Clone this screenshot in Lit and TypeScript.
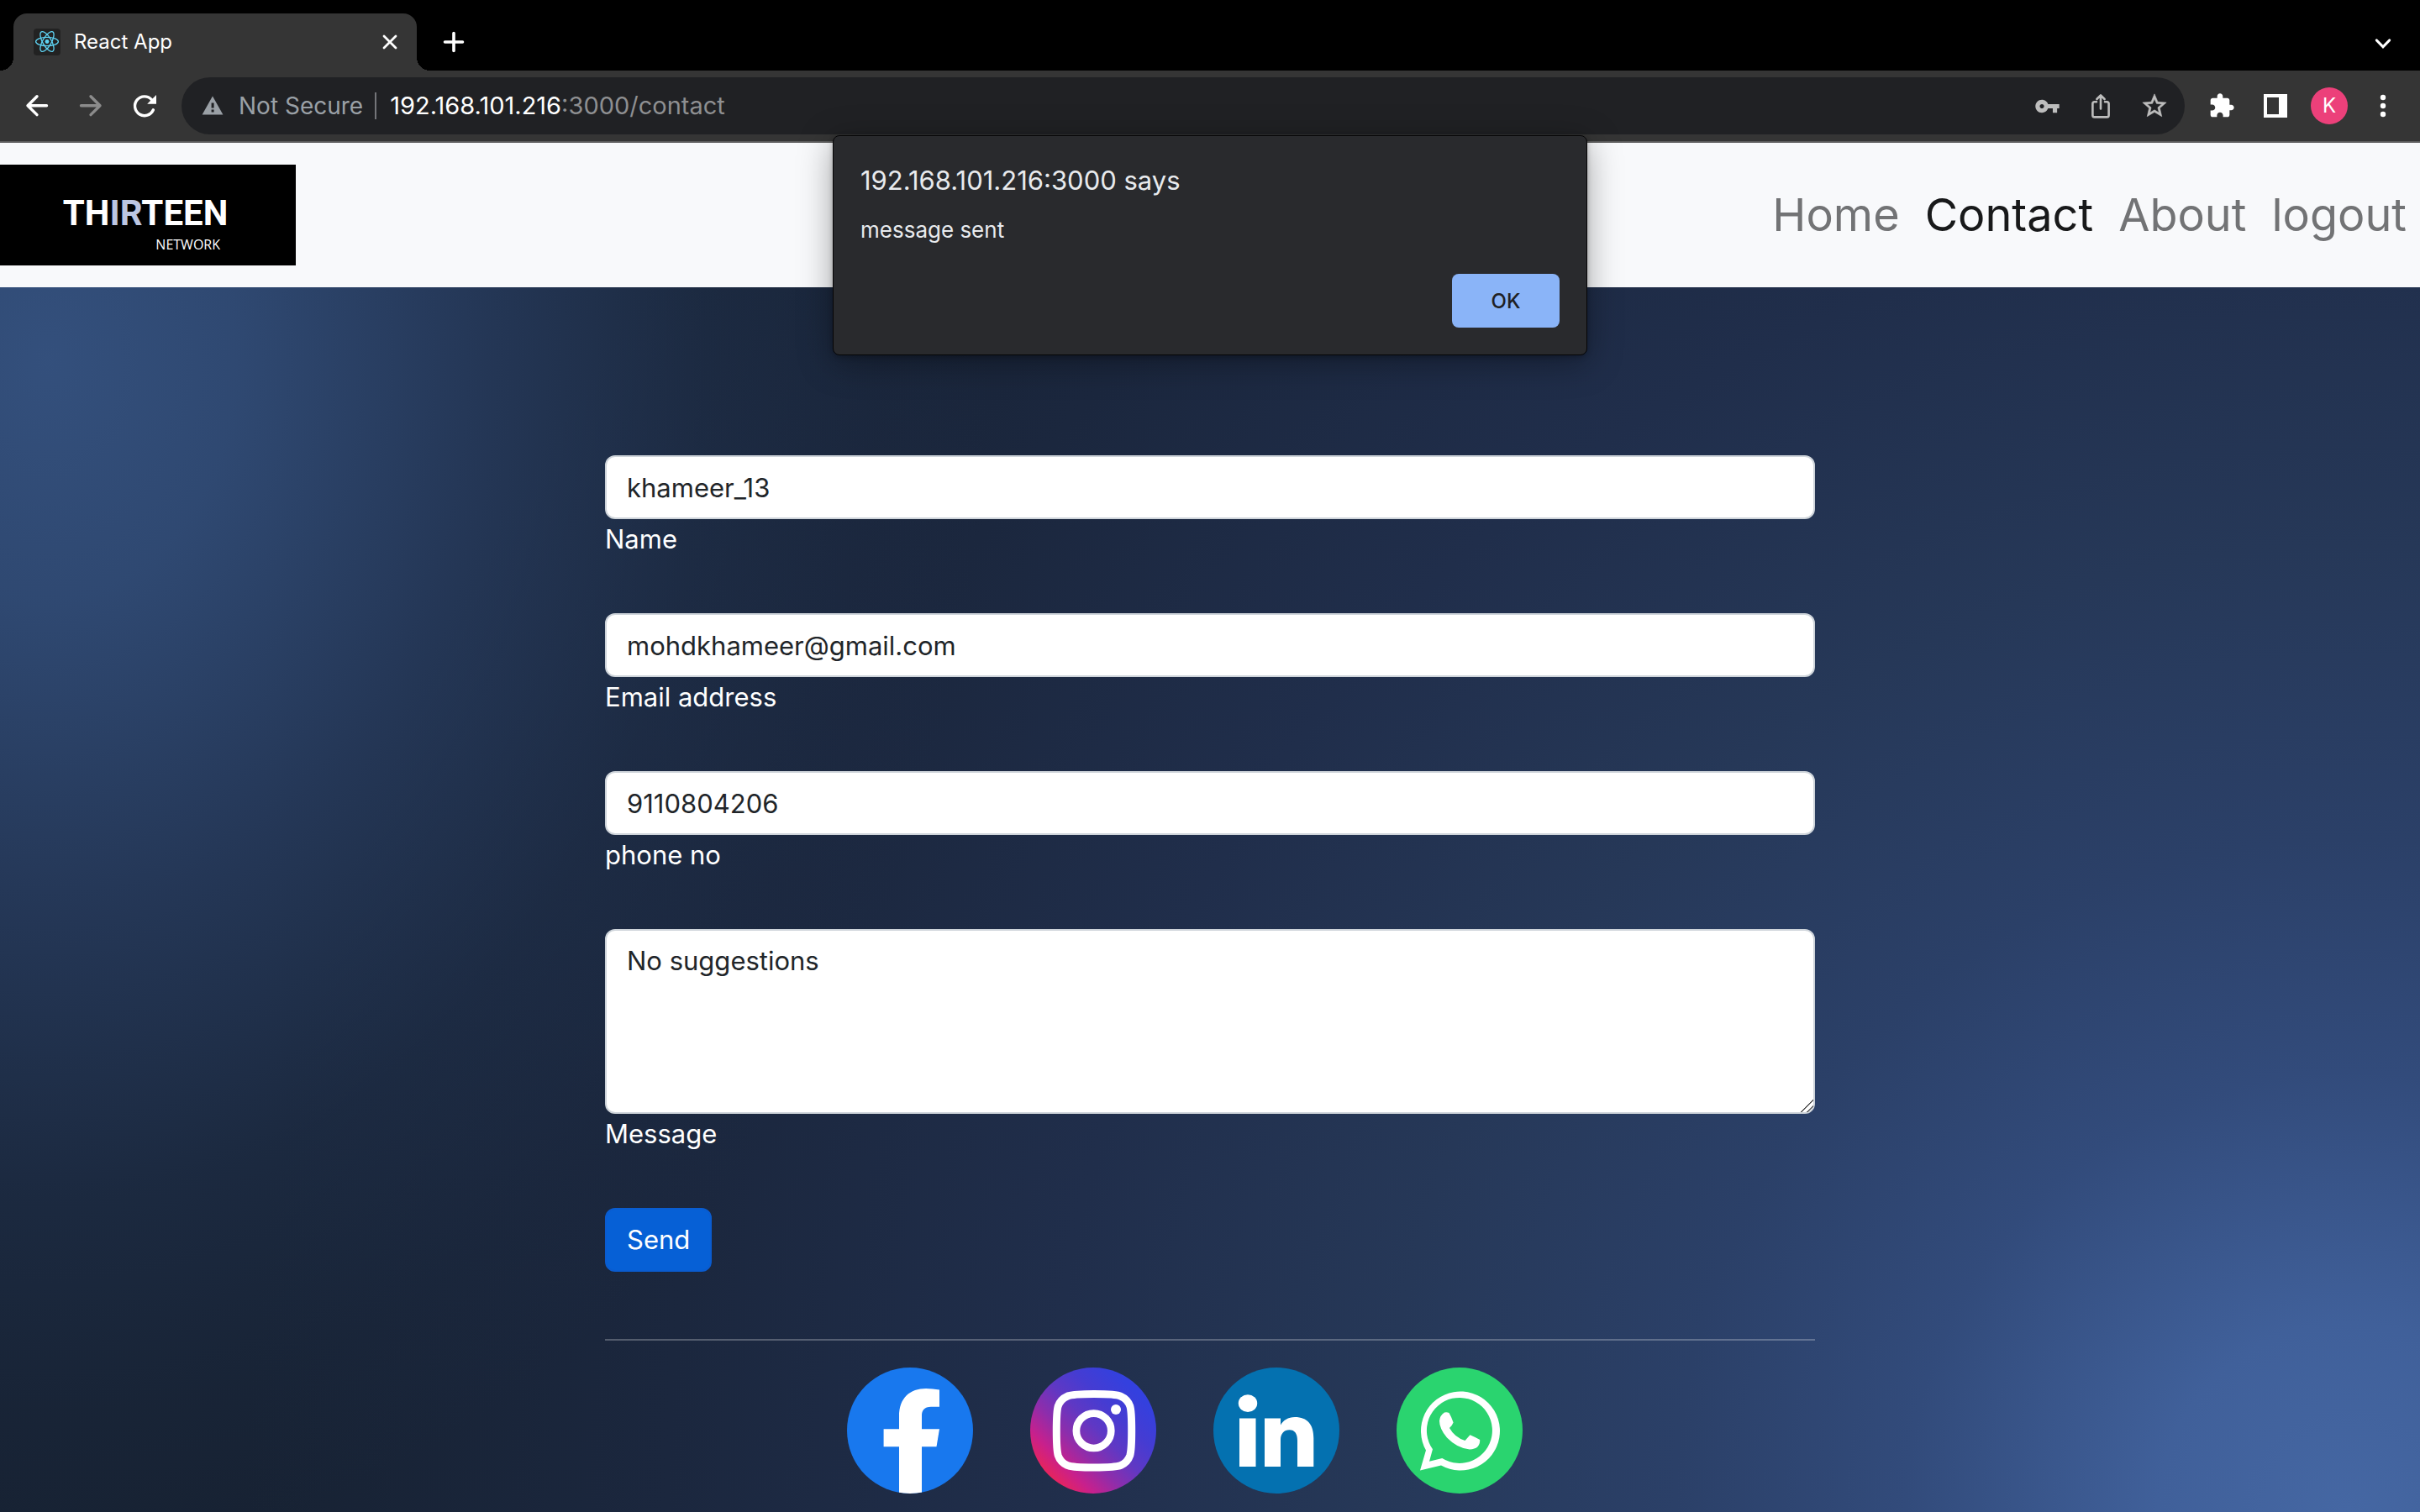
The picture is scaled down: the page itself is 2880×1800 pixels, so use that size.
import { LitElement, html, css, svg } from "lit";
import { customElement, property } from "lit/decorators.js";
import { classMap } from "lit/directives/class-map.js";

/* ---------- Browser frame ---------- */

@customElement("browser-bar")
class BrowserBar extends LitElement {
  static styles = css`
    :host {
      display: block;
      color: #fff;
    }
    button {
      appearance: none;
      border: 0;
      padding: 0;
      margin: 0;
      background: none;
      color: inherit;
      font: inherit;
      display: flex;
      align-items: center;
      justify-content: center;
      flex: none;
      width: 64px;
      height: 64px;
    }
    svg {
      display: block;
      flex: none;
    }
    .strip {
      display: flex;
      align-items: flex-end;
      justify-content: space-between;
      background: #000;
      padding: 16px 12px 0 16px;
    }
    .tabs {
      display: flex;
      align-items: center;
      gap: 12px;
    }
    .tab {
      position: relative;
      display: flex;
      align-items: center;
      gap: 16px;
      box-sizing: border-box;
      width: 480px;
      height: 68px;
      padding-left: 24px;
      background: #353535;
      border-radius: 16px 16px 0 0;
    }
    .tab::before,
    .tab::after {
      content: "";
      position: absolute;
      bottom: 0;
      width: 16px;
      height: 16px;
    }
    .tab::before {
      right: 100%;
      background: radial-gradient(circle at 0 0, transparent 16px, #353535 16px);
    }
    .tab::after {
      left: 100%;
      background: radial-gradient(circle at 100% 0, transparent 16px, #353535 16px);
    }
    .title {
      flex: 1;
      font-size: 24px;
      line-height: 32px;
    }
    .toolbar {
      display: flex;
      align-items: center;
      gap: 12px;
      padding: 8px 12px;
      background: #353535;
      border-bottom: 2px solid #5d5d5d;
    }
    .group {
      display: flex;
    }
    .muted {
      color: #8b8b8b;
    }
    .address {
      flex: 1;
      display: flex;
      align-items: center;
      height: 68px;
      box-sizing: border-box;
      padding: 0 4px 0 24px;
      border-radius: 34px;
      background: #202124;
      font-size: 28px;
      line-height: 36px;
    }
    .status {
      display: flex;
      align-items: center;
      gap: 18px;
      padding-right: 14px;
      border-right: 2px solid #747579;
      margin-right: 16px;
      color: #9aa0a6;
      line-height: 32px;
    }
    .url {
      flex: 1;
      color: #8e8f91;
      font-size: 29px;
    }
    .host {
      color: #fff;
    }
    .tools {
      color: #bdbdbd;
    }
    .avatar {
      width: 44px;
      height: 44px;
      border-radius: 50%;
      background: #ec407a;
      display: flex;
      align-items: center;
      justify-content: center;
      font-size: 24px;
      line-height: 44px;
    }
  `;

  render() {
    return html`
      <div class="strip">
        <div class="tabs">
          <div class="tab">
            <svg width="32" height="32" viewBox="0 0 32 32" fill="none" stroke="#5ed3f3" stroke-width="1.3" aria-hidden="true">
              <rect width="32" height="32" rx="4" fill="#222" stroke="none" />
              <ellipse cx="16" cy="15.5" rx="13.4" ry="5.2" />
              <ellipse cx="16" cy="15.5" rx="13.4" ry="5.2" transform="rotate(60 16 15.5)" />
              <ellipse cx="16" cy="15.5" rx="13.4" ry="5.2" transform="rotate(120 16 15.5)" />
              <circle cx="16" cy="15.5" r="2.4" fill="#5ed3f3" stroke="none" />
            </svg>
            <span class="title">React App</span>
            <button aria-label="Close tab">
              <svg width="20" height="20" viewBox="0 0 20 20" stroke="currentColor" stroke-width="2.8" stroke-linecap="round"><path d="M3 3l14 14M17 3L3 17" /></svg>
            </button>
          </div>
          <button aria-label="New tab">
            <svg width="28" height="28" viewBox="0 0 28 28" stroke="currentColor" stroke-width="3.6" stroke-linecap="round"><path d="M14 3.5v21M3.5 14h21" /></svg>
          </button>
        </div>
        <button aria-label="Search tabs">
          <svg width="24" height="24" viewBox="0 0 24 24" fill="none" stroke="currentColor" stroke-width="3.2" stroke-linecap="round"><path d="M4.4 8L12 15.8 19.6 8" /></svg>
        </button>
      </div>
      <div class="toolbar">
        <div class="group">
          <button aria-label="Back">
            <svg width="32" height="32" viewBox="0 0 32 32" fill="none" stroke="currentColor" stroke-width="3.4" stroke-linecap="round" stroke-linejoin="round"><path d="M27.5 15.7H5M16 4.8L5 15.7 16 26.6" /></svg>
          </button>
          <button class="muted" aria-label="Forward">
            <svg width="32" height="32" viewBox="0 0 32 32" fill="none" stroke="currentColor" stroke-width="3.4" stroke-linecap="round" stroke-linejoin="round"><path d="M4.5 15.7H27M16 4.8l11 10.9L16 26.6" /></svg>
          </button>
          <button aria-label="Reload">
            <svg width="40" height="40" viewBox="0 0 40 40" fill="none" stroke="currentColor" stroke-width="3.4" stroke-linecap="round">
              <path d="M30.4 24.8A11.4 11.4 0 1 1 28.4 12.6" />
              <path d="M34 7V17.8H23.2Z" fill="currentColor" stroke="none" />
            </svg>
          </button>
        </div>
        <div class="address">
          <span class="status">
            <svg width="26" height="24" viewBox="0 0 26 24" aria-hidden="true"><path d="M13 0.5L25.4 22.5H0.6Z" fill="currentColor" /><path d="M11.6 8.5h3v6h-3zM11.6 16.6h3v3h-3z" fill="#202124" /></svg>
            Not Secure
          </span>
          <span class="url"><span class="host">192.168.101.216</span>:3000/contact</span>
          <div class="group tools">
            <button aria-label="Manage passwords">
              <svg width="31" height="31" viewBox="0 0 24 24" fill="currentColor"><path d="M12.65 10C11.83 7.67 9.61 6 7 6c-3.31 0-6 2.69-6 6s2.69 6 6 6c2.61 0 4.83-1.67 5.65-4H17v4h4v-4h2v-4H12.65zM7 14c-1.1 0-2-.9-2-2s.9-2 2-2 2 .9 2 2-.9 2-2 2z" /></svg>
            </button>
            <button aria-label="Share">
              <svg width="32" height="32" viewBox="0 0 32 32" fill="none" stroke="currentColor" stroke-width="2.6" stroke-linecap="round" stroke-linejoin="round"><path d="M11 11.2H8.6Q6.4 11.2 6.4 13.4V27.2Q6.4 29.4 8.6 29.4H23.4Q25.6 29.4 25.6 27.2V13.4Q25.6 11.2 23.4 11.2H21M16 19.5V3.6M11.4 8L16 3.4 20.6 8" /></svg>
            </button>
            <button aria-label="Bookmark this tab">
              <svg width="34" height="34" viewBox="0 0 24 24" fill="currentColor" stroke="currentColor" stroke-width="0.4"><path d="M22 9.24l-7.19-.62L12 2 9.19 8.63 2 9.24l5.46 4.73L5.82 21 12 17.27 18.18 21l-1.63-7.03L22 9.24zM12 15.4l-3.76 2.27 1-4.28-3.32-2.88 4.38-.38L12 6.1l1.71 4.04 4.38.38-3.32 2.88 1 4.28L12 15.4z" /></svg>
            </button>
          </div>
        </div>
        <div class="group">
          <button aria-label="Extensions">
            <svg width="32" height="32" viewBox="0 0 24 24" fill="currentColor"><path d="M20.5 11H19V7c0-1.1-.9-2-2-2h-4V3.5C13 2.12 11.88 1 10.5 1S8 2.12 8 3.5V5H4c-1.1 0-1.99.9-1.99 2v3.8H3.5c1.49 0 2.7 1.21 2.7 2.7s-1.21 2.7-2.7 2.7H2V20c0 1.1.9 2 2 2h3.8v-1.5c0-1.49 1.21-2.7 2.7-2.7 1.49 0 2.7 1.21 2.7 2.7V22H17c1.1 0 2-.9 2-2v-4h1.5c1.38 0 2.5-1.12 2.5-2.5S21.88 11 20.5 11z" /></svg>
          </button>
          <button aria-label="Side panel">
            <svg width="28" height="28" viewBox="0 0 28 28" fill="currentColor" fill-rule="evenodd"><path d="M0 0h28v28H0zM4 4v20h14V4z" /></svg>
          </button>
          <button aria-label="Profile"><span class="avatar">K</span></button>
          <button aria-label="Menu">
            <svg width="8" height="28" viewBox="0 0 8 28" fill="currentColor"><circle cx="4" cy="4" r="3.2" /><circle cx="4" cy="14" r="3.2" /><circle cx="4" cy="24" r="3.2" /></svg>
          </button>
        </div>
      </div>
    `;
  }
}

/* ---------- Site header ---------- */

@customElement("site-header")
class SiteHeader extends LitElement {
  @property() current = "Contact";

  static styles = css`
    :host {
      display: flex;
      align-items: center;
      justify-content: space-between;
      padding: 26px 0;
      background: #f8f9fb;
    }
    .brand {
      display: flex;
      flex-direction: column;
      align-items: center;
      justify-content: flex-end;
      box-sizing: border-box;
      width: 352px;
      height: 120px;
      padding: 0 6px 14px 0;
      background: #000;
      color: #fff;
      text-decoration: none;
    }
    .word {
      font-family: Roboto, "Open Sans", sans-serif;
      font-weight: 700;
      font-size: 42px;
      line-height: 52px;
    }
    .accent {
      color: #bcc6e2;
    }
    .sub {
      align-self: flex-end;
      padding-right: 84px;
      font-family: "Open Sans", sans-serif;
      font-size: 16px;
      line-height: 22px;
    }
    nav {
      display: flex;
      gap: 30px;
      padding-right: 16px;
    }
    .link {
      font-size: 54px;
      line-height: 80px;
      color: #727375;
      text-decoration: none;
    }
    .active {
      color: #18191a;
    }
  `;

  render() {
    return html`
      <a class="brand" href="#home">
        <span class="word">TH<span class="accent">IR</span>TEEN</span>
        <span class="sub">NETWORK</span>
      </a>
      <nav>
        ${["Home", "Contact", "About", "logout"].map(
          (name) => html`<a
            class=${classMap({ link: true, active: name === this.current })}
            href="#${name.toLowerCase()}"
            >${name}</a
          >`
        )}
      </nav>
    `;
  }
}

/* ---------- Contact form ---------- */

interface Field {
  id: string;
  label: string;
  type: string;
  value: string;
}

const FIELDS: Field[] = [
  { id: "name", label: "Name", type: "text", value: "khameer_13" },
  { id: "email", label: "Email address", type: "email", value: "mohdkhameer@gmail.com" },
  { id: "phone", label: "phone no", type: "tel", value: "9110804206" },
];

@customElement("contact-form")
class ContactForm extends LitElement {
  static styles = css`
    :host {
      display: block;
    }
    form {
      display: flex;
      flex-direction: column;
      align-items: flex-start;
      gap: 64px;
    }
    .field {
      display: flex;
      flex-direction: column;
      align-items: flex-start;
      width: 100%;
    }
    .control,
    .send {
      box-sizing: border-box;
      margin: 0;
      font: inherit;
      font-size: 31px;
      line-height: 48px;
      padding: 12px 24px;
      border: 2px solid #ced4da;
      border-radius: 12px;
    }
    .control {
      width: 100%;
      height: 76px;
      color: #212529;
      background: #fff;
      outline: none;
    }
    .area {
      display: block;
      height: 220px;
      resize: vertical;
    }
    .area::-webkit-scrollbar {
      width: 20px;
      background: transparent;
    }
    .area::-webkit-resizer {
      background: linear-gradient(
        135deg,
        transparent 48%,
        #4a4a4a 50%,
        #4a4a4a 53%,
        transparent 55%,
        transparent 72%,
        #4a4a4a 74%,
        #4a4a4a 77%,
        transparent 79%
      );
    }
    label {
      font-size: 31px;
      line-height: 48px;
      color: #fff;
    }
    .send {
      color: #fff;
      background: #0660d6;
      border-color: #0a5cd0;
    }
  `;

  render() {
    return html`
      <form @submit=${(e: Event) => e.preventDefault()}>
        ${FIELDS.map(
          (f) => html`<div class="field">
            <input class="control" id=${f.id} type=${f.type} .value=${f.value} />
            <label for=${f.id}>${f.label}</label>
          </div>`
        )}
        <div class="field">
          <textarea class="control area" id="message" .value=${"No suggestions"}></textarea>
          <label for="message">Message</label>
        </div>
        <button class="send" type="submit">Send</button>
      </form>
    `;
  }
}

/* ---------- Social links ---------- */

const SOCIAL = [
  {
    name: "Facebook",
    art: svg`
      <clipPath id="disc"><circle cx="75" cy="75" r="75" /></clipPath>
      <circle cx="75" cy="75" r="75" fill="#1878ee" />
      <path clip-path="url(#disc)" fill="#fff" d="M62 150V94.3H43.6V73.3H62V58C62 36 75 25 94 25Q102 25 110 26.6V46.7H100C92 46.7 89 51 89 57V73.3H110L106.5 94.3H89V150Z" />`,
  },
  {
    name: "Instagram",
    art: svg`
      <linearGradient id="insta" x1="0" y1="1" x2="1" y2="0">
        <stop offset="0.12" stop-color="#ee2552" />
        <stop offset="0.25" stop-color="#c8208c" />
        <stop offset="0.38" stop-color="#8e2dab" />
        <stop offset="0.52" stop-color="#5f38c4" />
        <stop offset="0.66" stop-color="#453cd2" />
        <stop offset="0.82" stop-color="#3440de" />
      </linearGradient>
      <circle cx="75" cy="75" r="75" fill="url(#insta)" />
      <path fill="none" stroke="#fff" stroke-width="9" d="M76 31.6C94 31.6 103 32 108 34.4C114 37 117 41 118.8 46C120.4 51 120.7 60 120.7 75.3C120.7 91 120.4 99 118.8 104.6C117 110 114 113.6 108 116.4C103 118.6 94 119 76 119C58 119 49 118.6 44 116.4C38 113.6 35 110 33.2 104.6C31.6 99 31.3 91 31.3 75.3C31.3 60 31.6 51 33.2 46C35 41 38 37 44 34.4C49 32 58 31.6 76 31.6Z" />
      <circle cx="75.6" cy="75.3" r="20.7" fill="none" stroke="#fff" stroke-width="8.7" />
      <circle cx="102" cy="50" r="6" fill="#fff" />`,
  },
  {
    name: "LinkedIn",
    art: svg`
      <circle cx="75" cy="75" r="75" fill="#0471b0" />
      <ellipse cx="41" cy="42.6" rx="11.2" ry="10.4" fill="#fff" />
      <path fill="#fff" d="M31 60.5H50.5V118H31ZM61 60.5H80V68.5C83 63 89 59 97 59C112 59 119.3 68 119.3 84V118H100V87C100 79 97 74.3 90.5 74.3C84 74.3 80 79 80 86V118H61Z" />`,
  },
  {
    name: "WhatsApp",
    art: svg`
      <circle cx="75" cy="75" r="75" fill="#2ad46f" />
      <path fill="#fff" fill-rule="evenodd" d="M28 122.5L35 98.5A47 47 0 1 1 53 116.5ZM39 111.8L54.3 108A39 39 0 1 0 43 97.3Z" />
      <path fill="#fff" d="M57 53.5Q60 52.8 62.5 54Q65.5 59 67.6 65.5Q66.5 68.5 63 72Q69 83 81.5 87L87.5 80.2Q93 82.5 99.2 86Q99.5 97 87 97.5Q72 96 60 83.5Q51 73 51 63.5Q51.5 57 57 53.5Z" />`,
  },
];

@customElement("social-links")
class SocialLinks extends LitElement {
  static styles = css`
    :host {
      display: flex;
      justify-content: center;
      gap: 68px;
      padding: 32px 60px 22px 0;
      border-top: 2px solid rgba(255, 255, 255, 0.25);
    }
    svg {
      display: block;
      width: 150px;
      height: 150px;
    }
  `;

  render() {
    return SOCIAL.map(
      (s) => html`<a href="#${s.name.toLowerCase()}" aria-label=${s.name}><svg viewBox="0 0 150 150">${s.art}</svg></a>`
    );
  }
}

/* ---------- Alert ---------- */

@customElement("page-alert")
class PageAlert extends LitElement {
  static styles = css`
    :host {
      display: flex;
      flex-direction: column;
      box-sizing: border-box;
      width: 898px;
      padding: 32px;
      background: #292a2d;
      color: #e8eaed;
      border: 1px solid #050506;
      border-radius: 8px;
      box-shadow: 0 8px 40px rgba(0, 0, 0, 0.35), 0 2px 6px rgba(0, 0, 0, 0.25);
    }
    .origin {
      font-size: 31px;
      line-height: 42px;
    }
    .text {
      margin: 20px 0 0;
      font-size: 26px;
      line-height: 36px;
    }
    .ok {
      align-self: flex-end;
      width: 128px;
      height: 64px;
      margin-top: 34px;
      padding: 0;
      border: 0;
      border-radius: 8px;
      background: #8ab4f8;
      color: #202124;
      font: inherit;
      font-size: 24px;
      font-weight: 500;
    }
  `;

  render() {
    return html`
      <div class="origin">192.168.101.216:3000 says</div>
      <p class="text">message sent</p>
      <button class="ok">OK</button>
    `;
  }
}

/* ---------- Root ---------- */

@customElement("app-root")
class AppRoot extends LitElement {
  static styles = css`
    :host {
      display: flex;
      flex-direction: column;
      min-height: 100vh;
      font-family: Inter, "Liberation Sans", sans-serif;
    }
    .page {
      position: relative;
      flex: 1;
      display: flex;
      flex-direction: column;
    }
    .alert {
      position: absolute;
      z-index: 1;
      top: -9px;
      left: 50%;
      transform: translateX(-50%);
    }
    main {
      flex: 1;
      display: grid;
      grid-template-columns: 50%;
      justify-content: center;
      align-content: start;
      gap: 80px;
      padding-top: 200px;
      background:
        radial-gradient(
          ellipse 1120px 1420px at 2% 6%,
          rgba(53, 82, 128, 0.95) 0%,
          rgba(51, 79, 124, 0.86) 20%,
          rgba(46, 70, 112, 0.58) 46%,
          rgba(40, 62, 100, 0.26) 70%,
          rgba(38, 58, 94, 0.08) 88%,
          rgba(38, 58, 94, 0) 100%
        ),
        radial-gradient(
          circle 2500px at 97% 100%,
          #4567a3 0%,
          #40609a 9%,
          #324b7b 21%,
          #2b4068 32%,
          #263858 46%,
          #202e4b 62%,
          #1b273e 80%,
          #172233 100%
        );
    }
  `;

  render() {
    return html`
      <browser-bar></browser-bar>
      <div class="page">
        <page-alert class="alert" role="alertdialog" aria-label="Page message"></page-alert>
        <site-header current="Contact"></site-header>
        <main>
          <contact-form></contact-form>
          <social-links></social-links>
        </main>
      </div>
    `;
  }
}
